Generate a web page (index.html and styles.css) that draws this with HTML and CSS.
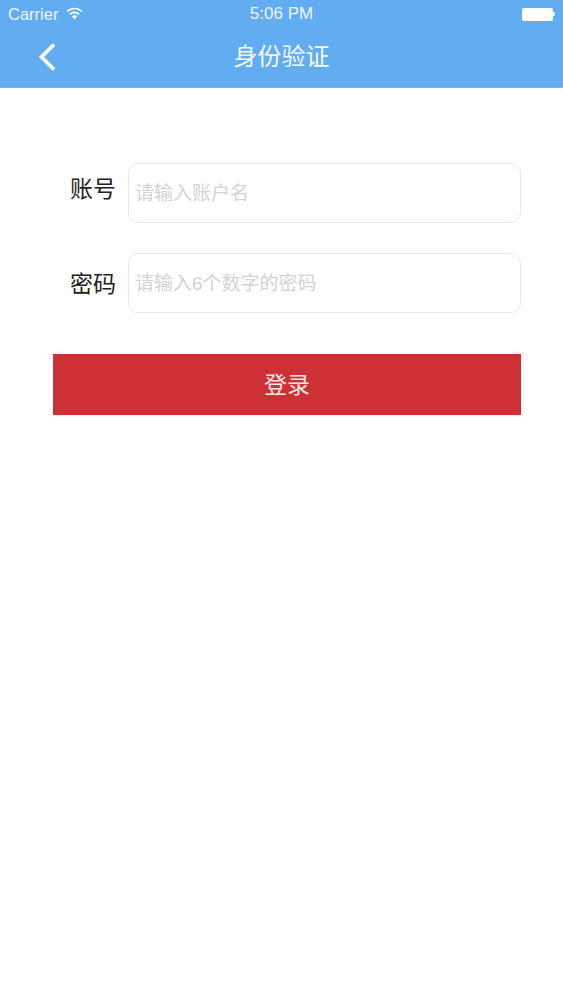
FILE: index.html
```html
<!DOCTYPE html>
<html lang="zh">
<head>
<meta charset="utf-8">
<title>身份验证</title>
<link rel="stylesheet" href="styles.css">
</head>
<body>
<header class="header">
  <div class="status">
    <div class="status-left">
      <span>Carrier</span>
      <svg class="wifi" viewBox="0 0 16 12" width="17" height="13"><path d="M8 11.5 5.6 8.8a3.4 3.4 0 0 1 4.800 0z" fill="#fff"/><path d="M3.700 6.800a6 6 0 0 1 8.600 0M1.200 4.100a9.600 9.600 0 0 1 13.600 0" fill="none" stroke="#fff" stroke-width="1.500"/></svg>
    </div>
    <span class="time">5:06 PM</span>
    <div class="battery"><span class="battery-body"></span><span class="battery-tip"></span></div>
  </div>
  <div class="nav">
    <svg class="back" viewBox="0 0 20 30" width="20" height="30"><path d="M17 2.500 4.500 15 17 27.500" fill="none" stroke="#fff" stroke-width="3.800"/></svg>
    <h1 class="title">身份验证</h1>
  </div>
</header>
<main class="form">
  <div class="row row-first">
    <label class="label">账号</label>
    <div class="field">请输入账户名</div>
  </div>
  <div class="row row-second">
    <label class="label label-low">密码</label>
    <div class="field">请输入6个数字的密码</div>
  </div>
  <button class="submit">登录</button>
</main>
</body>
</html>
```
FILE: styles.css
```css
* { box-sizing: border-box; }
html, body { margin: 0; height: 100%; background: #fff; }
body { font-family: "Liberation Sans", "Noto Sans CJK SC", sans-serif; overflow: hidden; }
.header { height: 88px; background: #62adf2; border-bottom: 1px solid #7fb2e6; color: #fff; }
.status { position: relative; height: 30px; display: flex; align-items: center; justify-content: space-between; padding: 0 8px 2px 8px; font-size: 16.500px; color: #eef6fe; }
.status-left { display: flex; align-items: center; gap: 8px; }
.wifi { margin-top: -2px; }
.time { position: absolute; left: 0; right: 0; text-align: center; font-size: 17px; }
.battery { display: flex; align-items: center; }
.battery-body { width: 31px; height: 13px; background: #fff; border-radius: 2px; }
.battery-tip { width: 2px; height: 4px; background: #dceafa; }
.nav { position: relative; height: 57px; display: flex; align-items: center; justify-content: center; }
.back { position: absolute; left: 37px; top: 12px; }
.title { margin: 0 0 4px; font-size: 24px; font-weight: 400; line-height: 34px; color: #f4f9fe; }
.form { padding: 75px 42px 0 53px; display: flex; flex-direction: column; }
.row { display: flex; align-items: center; height: 60px; }
.row-second { margin-top: 30px; }
.label { width: 75px; padding-left: 17px; font-size: 23px; line-height: 30px; color: #222; margin-top: -8px; }
.label-low { margin-top: 2px; }
.field { flex: 1; height: 60px; border: 1px solid #e8e8ec; border-radius: 10px; padding: 0 7px 0 6px; font-size: 19px; line-height: 59px; color: #d2d2d8; }
.submit { margin-top: 41px; height: 61px; border: 0; background: #cd3035; color: #f6e4e4; font: inherit; font-size: 23px; line-height: 58px; padding: 0; }
```
